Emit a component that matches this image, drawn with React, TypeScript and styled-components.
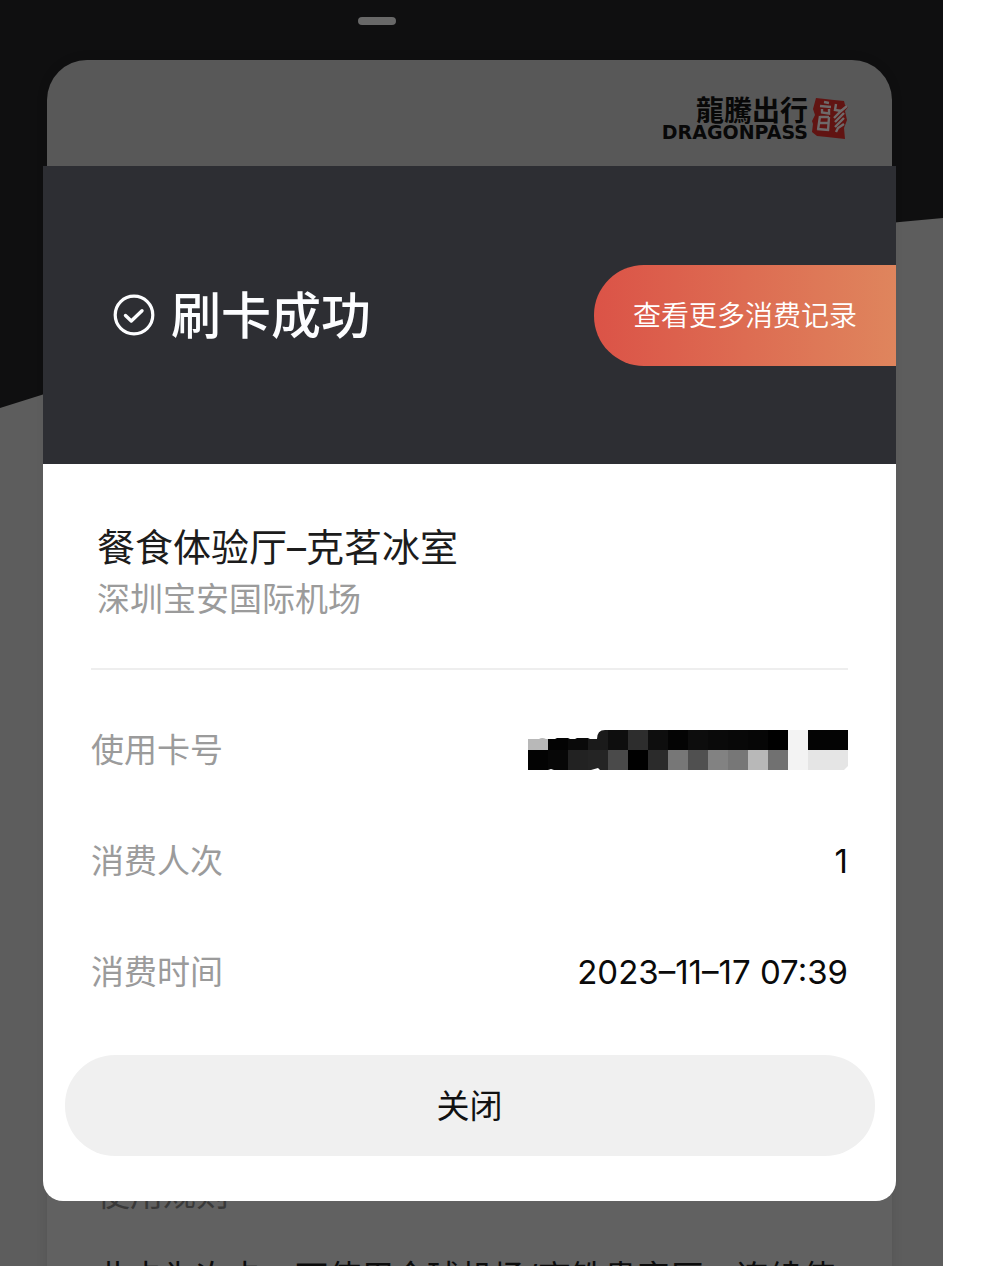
import React from 'react';
import styled, { createGlobalStyle } from 'styled-components';

const GlobalStyle = createGlobalStyle`
  * { box-sizing: border-box; }
  body {
    margin: 0;
    background: #fff;
    font-family: Inter, 'Noto Sans CJK SC', sans-serif;
  }
  h1, h2, h3, p, dl, dd { margin: 0; font-weight: 400; }
`;

const Screen = styled.div`
  display: grid;
  grid-template-columns: minmax(0, 1fr);
  height: 100vh;
  margin-right: 47px;
  overflow: hidden;
  background: #5d5d5d;
`;

const Backdrop = styled.svg`
  grid-area: 1 / 1;
  display: block;
  width: 100%;
  height: 408px;
`;

const Page = styled.main`
  grid-area: 1 / 1;
  display: flex;
  flex-direction: column;
  min-width: 0;
`;

const Pager = styled.div`
  flex: none;
  height: 60px;
  padding: 17px 0 0 38%;
`;

const PagerDot = styled.span`
  display: block;
  width: 38px;
  height: 8px;
  border-radius: 4px;
  background: #686868;
`;

const MemberCard = styled.section`
  flex: none;
  margin: 0 51px 0 47px;
  border-radius: 40px;
  background: linear-gradient(#585858 110px, #616161 700px);
  box-shadow: 0 0 12px rgba(0, 0, 0, 0.1);
`;

const CardTop = styled.header`
  display: flex;
  justify-content: flex-end;
  gap: 3px;
  height: 1110px;
  padding: 37px 43px 0 0;
`;

const Brand = styled.div`
  display: flex;
  flex-direction: column;
  align-items: flex-end;
  color: #080808;
`;

const BrandChinese = styled.span`
  font: 700 28px/24px 'Noto Sans CJK TC', sans-serif;
`;

const BrandLatin = styled.span`
  font: 700 19px/22px 'DejaVu Sans', sans-serif;
`;

const Rules = styled.div`
  padding: 0 50px 80px;
  font-size: 33px;
  line-height: 48px;
`;

const RulesTitle = styled.h3`
  margin-bottom: 35px;
  font-size: 33px;
  color: #393939;
`;

const RulesText = styled.p`
  color: #0c0c0c;
`;

const Dialog = styled.section`
  grid-area: 1 / 1;
  align-self: start;
  z-index: 1;
  min-width: 0;
  margin: 166px 47px 0 43px;
  border-radius: 0 0 20px 20px;
  overflow: hidden;
  background: #fff;
`;

const DialogHeader = styled.header`
  display: flex;
  align-items: center;
  justify-content: space-between;
  height: 298px;
  padding-left: 70px;
  background: #2d2e33;
`;

const Status = styled.div`
  display: flex;
  align-items: center;
  gap: 16px;
`;

const StatusTitle = styled.h1`
  padding-top: 2px;
  font-size: 50px;
  font-weight: 500;
  line-height: 60px;
  white-space: nowrap;
  color: #fcfdff;
`;

const RecordsButton = styled.button`
  height: 101px;
  padding: 2px 39px 0;
  border: 0;
  border-radius: 50px 0 0 50px;
  background: linear-gradient(90deg, #db5347, #df855d);
  color: #fff;
  font: 350 28px/40px Inter, 'Noto Sans CJK SC', sans-serif;
  white-space: nowrap;
`;

const Venue = styled.div`
  margin: 0 48px;
  padding: 57px 6px 43px;
  border-bottom: 2px solid #eee;
`;

const VenueName = styled.h2`
  font-size: 38px;
  line-height: 52px;
  color: #1c1c1c;
`;

const VenuePlace = styled.p`
  font-size: 33px;
  line-height: 52px;
  color: #9b9b9b;
`;

const Details = styled.dl`
  padding: 24px 48px 28px;
`;

const DetailRow = styled.div`
  display: flex;
  align-items: center;
  justify-content: space-between;
  height: 111px;
  font-size: 33px;
  line-height: 48px;
`;

const DetailLabel = styled.dt`
  color: #9b9b9b;
`;

const DetailValue = styled.dd`
  display: flex;
  color: #0a0a0a;
`;

const CloseButton = styled.button`
  display: block;
  width: calc(100% - 43px);
  height: 101px;
  margin: 0 auto 45px;
  border: 0;
  border-radius: 50px;
  background: #f0f0f0;
  color: #111;
  font: 400 33px/48px Inter, 'Noto Sans CJK SC', sans-serif;
`;

const maskTop = ['#b8b8b8', '#030303', '#0a0a0a', '#1a1a1a', '#0e0e0e', '#2d2d2d', '#0e0e0e', '#040404', '#0d0d0d', '#0a0a0a', '#080808', '#060606', '#000', '#f3f3f3', '#040404', '#040404'];
const maskBottom = ['#030303', '#070707', '#222', '#242424', '#4a4a4a', '#000', '#2b2b2b', '#777', '#505050', '#828282', '#777', '#b8b8b8', '#717171', '#f3f3f3', '#e5e5e5', '#e5e5e5'];

const MaskedNumber = () => (
  <svg width="320" height="40" viewBox="0 0 320 40" role="img" aria-label="卡号已隐藏">
    <clipPath id="mask-outline">
      <path d="M0 9H11Q14 7 18 9H27L29 8H40L42 9H47L49 8H60L62 9H69Q69 0 77 0H320V36L316 40H72L70 38L63 40H26L23 39L20 40H0Z" />
    </clipPath>
    <g clipPath="url(#mask-outline)" shapeRendering="crispEdges">
      {maskTop.map((c, i) => <rect key={i} x={i * 20} width="20" height="20" fill={c} />)}
      {maskBottom.map((c, i) => <rect key={i} x={i * 20} y="20" width="20" height="20" fill={c} />)}
    </g>
  </svg>
);

const CheckIcon = () => (
  <svg width="42" height="42" viewBox="0 0 42 42" fill="none" stroke="#fcfdff" strokeLinecap="round" strokeLinejoin="round" aria-hidden="true">
    <circle cx="21" cy="21" r="18.8" strokeWidth="3.2" />
    <path d="M12.5 21.5L18.3 27L29 16.7" strokeWidth="3.4" />
  </svg>
);

const Seal = () => (
  <svg width="38" height="44" viewBox="0 0 38 44" fill="none" aria-hidden="true">
    <path d="M5 1L14 2L23 3L33 4L34 8L37 10L34 14L36 23L33 31L34 42L25 41L16 40L6 39L1 35L2 27L1 24L4 18L2 12Z" fill="#611412" />
    <g stroke="#6e6a6a" strokeWidth="2.4">
      <path d="M13 5L18 6M9 9L20 10M11 12V15.5L18 16.5V12M9 20H18M9 19L7 33M18 20L17 34M8 26H18M6 32L18 33" />
      <path d="M25 7L24 13L31 14M36 9L30 14L23 21M33 16L24 25M33 21L24 30M33 27L27 31L25 35" />
    </g>
  </svg>
);

export default function App() {
  return (
    <>
      <GlobalStyle />
      <Screen>
        <Backdrop viewBox="0 0 943 408" preserveAspectRatio="none" aria-hidden="true">
          <path d="M0 0H943V218Q452 261 0 408Z" fill="#0f0f10" />
        </Backdrop>
        <Page>
          <Pager><PagerDot /></Pager>
          <MemberCard>
            <CardTop>
              <Brand>
                <BrandChinese>龍騰出行</BrandChinese>
                <BrandLatin>DRAGONPASS</BrandLatin>
              </Brand>
              <Seal />
            </CardTop>
            <Rules>
              <RulesTitle>使用规则</RulesTitle>
              <RulesText>此卡为次卡，可使用全球机场/高铁贵宾厅，连续使</RulesText>
            </Rules>
          </MemberCard>
        </Page>
        <Dialog role="dialog" aria-labelledby="status-title">
          <DialogHeader>
            <Status>
              <CheckIcon />
              <StatusTitle id="status-title">刷卡成功</StatusTitle>
            </Status>
            <RecordsButton type="button">查看更多消费记录</RecordsButton>
          </DialogHeader>
          <Venue>
            <VenueName>餐食体验厅–克茗冰室</VenueName>
            <VenuePlace>深圳宝安国际机场</VenuePlace>
          </Venue>
          <Details>
            <DetailRow>
              <DetailLabel>使用卡号</DetailLabel>
              <DetailValue><MaskedNumber /></DetailValue>
            </DetailRow>
            <DetailRow>
              <DetailLabel>消费人次</DetailLabel>
              <DetailValue>1</DetailValue>
            </DetailRow>
            <DetailRow>
              <DetailLabel>消费时间</DetailLabel>
              <DetailValue>2023–11–17 07:39</DetailValue>
            </DetailRow>
          </Details>
          <CloseButton type="button">关闭</CloseButton>
        </Dialog>
      </Screen>
    </>
  );
}
